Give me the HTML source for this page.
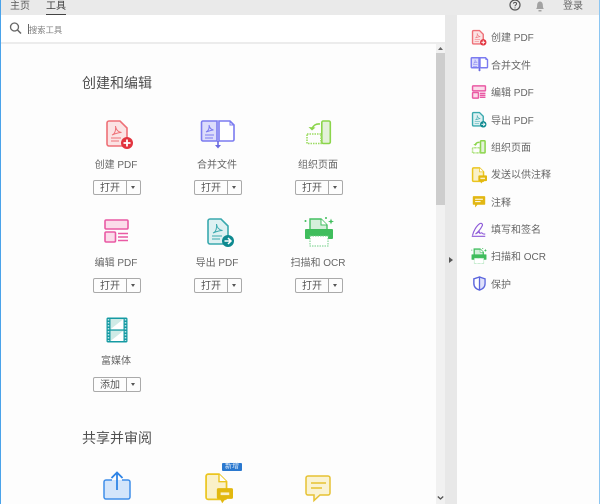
<!DOCTYPE html>
<html lang="zh"><head><meta charset="utf-8"><style>
*{box-sizing:border-box}
html,body{margin:0;padding:0}
body{width:600px;height:504px;overflow:hidden;position:relative;background:#fdfdfd;font-family:"Liberation Sans","Noto Sans CJK SC",sans-serif;color:#6e6e6e}
.a{position:absolute}
.t{position:absolute;white-space:nowrap;line-height:14px}
.lab{position:absolute;width:100px;text-align:center;font-size:10px;line-height:14px;color:#666;white-space:nowrap}
.h{position:absolute;left:82px;font-size:14px;line-height:20px;color:#505050;white-space:nowrap}
.btn{position:absolute;width:48px;height:15px;border:1px solid #aaa;border-radius:2px;background:#fdfdfd;font-size:10px;line-height:15px;color:#555}
.btn span{position:absolute;left:0;top:0;width:32px;height:13px;text-align:center}
.btn i{position:absolute;left:32px;top:0;width:1px;height:13px;background:#aaa}
.btn b{position:absolute;left:37px;top:5px;width:0;height:0;border:2.500px solid transparent;border-top:3px solid #555;border-bottom:0}
.s{position:absolute;left:491px;font-size:10px;line-height:14px;color:#666;white-space:nowrap}
svg{position:absolute;overflow:visible}
symbol{overflow:visible}
</style></head><body>

<div class="a" style="left:0;top:0;width:600px;height:15px;background:#eaeaea"></div>
<div class="t" style="left:10px;top:0;font-size:10px;color:#5a5a5a">主页</div>
<div class="t" style="left:46px;top:0;font-size:10px;color:#3f3f3f">工具</div>
<div class="a" style="left:46px;top:14px;width:20px;height:1px;background:#444"></div>
<div class="t" style="left:563px;top:0;font-size:10px;color:#666">登录</div>
<svg style="left:0;top:0" width="600" height="30">
<circle cx="515" cy="5" r="5" fill="none" stroke="#555" stroke-width="1.200"/>
<path d="M513.400 3.600c.3-1.600 3.200-1.600 3.200.2 0 1.200-1.600 1.100-1.600 2.400M515 7.400v1" fill="none" stroke="#555"/>
<path d="M536 9c1.200-1 1-2.500 1.200-4.500.3-2 1.500-3 2.800-3s2.500 1 2.800 3c.2 2 0 3.500 1.200 4.500z" fill="#a2a2a2"/>
<path d="M538.500 10h3v1.500h-3z" fill="#a2a2a2"/>
</svg>

<div class="a" style="left:0;top:15px;width:600px;height:27px;background:#fff"></div>
<svg style="left:0;top:15px" width="40" height="27">
<circle cx="14.500" cy="12" r="4" fill="none" stroke="#666" stroke-width="1.300"/>
<path d="M17.500 15l3.500 3.500" stroke="#666" stroke-width="1.500" fill="none"/>
</svg>
<div class="a" style="left:28px;top:24px;width:1px;height:10px;background:#666"></div>
<div class="t" style="left:29px;top:23px;font-size:8.300px;color:#808080">搜索工具</div>
<div class="a" style="left:0;top:42px;width:445px;height:2px;background:#ececec"></div>

<div class="a" style="left:436px;top:44px;width:9px;height:460px;background:#f1f1f1"></div>
<div class="a" style="left:436px;top:53px;width:9px;height:152px;background:#cdcdcd"></div>
<svg style="left:436px;top:44px" width="9" height="460">
<path d="M2 6l2.500-3 2.500 3z" fill="#666"/>
<path d="M1.800 452.500l2.700 2.500 2.700-2.500" fill="none" stroke="#555" stroke-width="1.300"/>
</svg>
<div class="a" style="left:445px;top:15px;width:12px;height:489px;background:#e8e8e8"></div>
<svg style="left:445px;top:250px" width="12" height="20"><path d="M4 7l4 3-4 3z" fill="#555"/></svg>
<div class="a" style="left:457px;top:15px;width:142px;height:489px;background:#fdfdfd"></div>
<div class="a" style="left:0;top:0;width:1px;height:504px;background:#4aa3ea"></div>
<div class="a" style="left:599px;top:0;width:1px;height:504px;background:#8cc6f2"></div>

<div class="h" style="top:73px">创建和编辑</div>

<svg width="0" height="0" style="left:0;top:0"><defs>
<symbol id="i1" viewBox="0 0 28 28"><path d="M1 3a2 2 0 0 1 2-2h11l7 7v16a2 2 0 0 1-2 2H3a2 2 0 0 1-2-2z" fill="#fbe3e4" stroke="#ee7077"/><path d="M5 18h10M5 21h8" stroke="#ee7077" stroke-width="1" fill="none"/><path d="M6 15c3-1 4-5 3.500-9 .5 4 3 6 6 6.500-3 0-6 1-9.500 2.500z" fill="none" stroke="#ee7077" stroke-width="1"/><circle cx="21" cy="23" r="6" fill="#e2343f"/><path d="M17.500 23h7M21 19.500v7" stroke="#fff" stroke-width="1.800"/></symbol>
<symbol id="i2" viewBox="0 0 34 29"><path d="M2 1h14v20H2a1.500 1.500 0 0 1-1.500-1.500v-17A1.500 1.500 0 0 1 2 1z" fill="#dcdcfb" stroke="#7b7bf0"/><path d="M18 1h11l4 4v14.500a1.500 1.500 0 0 1-1.500 1.500H18z" fill="#fff" stroke="#7b7bf0"/><path d="M29 1v4h4" fill="none" stroke="#7b7bf0" stroke-width="1"/><path d="M4 15h9M4 18h8" stroke="#7b7bf0" stroke-width="1"/><path d="M5 12c2.500-1 3.500-4 3-7 .5 3 2 4.500 4.500 5-2 0-4.500 1-7.500 2z" fill="none" stroke="#7b7bf0" stroke-width="1"/><path d="M17 21v6" stroke="#6a6ae0"/><path d="M14 25h6l-3 3.500z" fill="#6a6ae0"/></symbol>
<symbol id="i3" viewBox="0 0 26 25"><rect x="15.800" y="1" width="8.500" height="22.500" rx="1.500" fill="#e4f1da" stroke="#8bd54b"/><rect x="1" y="14" width="14" height="9.500" fill="none" stroke="#9bdc61" stroke-dasharray="1.500 1"/><path d="M14 4c-4-.5-7 1.500-8 5" fill="none" stroke="#8bd54b"/><path d="M2.500 7l3.500 3.500L9.500 7.500z" fill="#8bd54b"/></symbol>
<symbol id="i4" viewBox="0 0 25 24"><rect x="1" y="1" width="23" height="9" rx="1.200" fill="#fbdcea" stroke="#e95aa4"/><rect x="1" y="13" width="10.500" height="10" rx="1.200" fill="#fbdcea" stroke="#e95aa4"/><path d="M14 14.500h10M14 18h10M14 21.500h10" stroke="#e95aa4"/></symbol>
<symbol id="i5" viewBox="0 0 28 28"><path d="M1 3a2 2 0 0 1 2-2h11l7 7v16a2 2 0 0 1-2 2H3a2 2 0 0 1-2-2z" fill="#def1f2" stroke="#3aa9ae"/><path d="M5 18h10M5 21h8" stroke="#3aa9ae" stroke-width="1"/><path d="M6 15c3-1 4-5 3.500-9 .5 4 3 6 6 6.500-3 0-6 1-9.500 2.500z" fill="none" stroke="#3aa9ae" stroke-width="1"/><circle cx="21" cy="23" r="6" fill="#0e8a90"/><path d="M17.500 23h6M21 20l3 3-3 3" stroke="#fff" stroke-width="1.500" fill="none"/></symbol>
<symbol id="i6" viewBox="0 0 30 30"><path d="M6 13V2h11l6 6v5" fill="#d4efdb" stroke="#45c062"/><path d="M17 2v6h6" fill="#fff" stroke="#45c062" stroke-width="1"/><rect x="1" y="12" width="28" height="10" rx="1" fill="#3fbd5c"/><rect x="6" y="19" width="18" height="10" fill="#fff" stroke="#6fcf86" stroke-width="1" stroke-dasharray="1.500 1"/><path d="M27 1.500l.8 2.200 2.200.8-2.200.8-.8 2.200-.8-2.200-2.200-.8 2.200-.8z" fill="#3fbd5c"/><circle cx="1.500" cy="4" r="1" fill="#3fbd5c"/><circle cx="22" cy="1" r="1" fill="#3fbd5c"/></symbol>
<symbol id="i7" viewBox="0 0 22 26"><rect x=".5" y=".5" width="21" height="25" rx="1.500" fill="#159aa3"/><rect x="4.500" y="2" width="13" height="10.300" fill="#cfeae6"/><rect x="4.500" y="13.700" width="13" height="10.300" fill="#cfeae6"/><path d="M4.500 12.300L17.500 2v10.300zM4.500 24L17.500 13.700V24z" fill="#fff"/><path d="M2.500 2v22M19.500 2v22" stroke="#bfe6e8" stroke-width="1.500" stroke-dasharray="1.500 1.500"/></symbol>
<symbol id="i8" viewBox="0 0 26 25"><path d="M1 3a2 2 0 0 1 2-2h10l7 7v15a1.500 1.500 0 0 1-1.500 1.500H3a2 2 0 0 1-2-2z" fill="#faf1c8" stroke="#ebc51f"/><path d="M13 1v7h7" fill="#fff" stroke="#ebc51f" stroke-width="1.300"/><rect x="11" y="14" width="15" height="10" rx="1.500" fill="#e2b80f"/><path d="M14 24h5l-3 4z" fill="#e2b80f"/><path d="M14.500 18h8v2.500h-8z" fill="#faf1c8"/></symbol>
<symbol id="i9" viewBox="0 0 18 17"><path d="M2 1h14a1 1 0 0 1 1 1v9a1 1 0 0 1-1 1H7l-3 3.500V12H2a1 1 0 0 1-1-1V2a1 1 0 0 1 1-1z" fill="#e2b713"/><path d="M4 5h10M4 8h7" stroke="#fff" stroke-width="1.300"/></symbol>
<symbol id="i10" viewBox="0 0 20 20"><path d="M2 18C3 13 7 5 12 2c2-1 4 1 3 3-2 4-5 8-9 11 2-1 4-3 5-3 1 .5-.5 2 1 2s2-1.500 3 0 2 1 4 1M1 19h18" fill="none" stroke="#8d59d8" stroke-width="1.500"/></symbol>
<symbol id="i11" viewBox="0 0 14 16"><path d="M7 1l6 2v5c0 3.500-2.500 6-6 7-3.500-1-6-3.500-6-7V3z" fill="#dfe1fb" stroke="#5c66dd" stroke-width="1.400"/><path d="M7 1v14c-3.500-1-6-3.500-6-7V3z" fill="#fff" stroke="#5c66dd" stroke-width="1.400"/></symbol>
</defs></svg>

<svg style="left:106px;top:120px" width="28" height="28"><use href="#i1" width="28" height="28" stroke-width="1.600"/></svg>
<svg style="left:201px;top:120px" width="34" height="29"><use href="#i2" width="34" height="29" stroke-width="1.600"/></svg>
<svg style="left:306px;top:120px" width="26" height="25"><use href="#i3" width="26" height="25" stroke-width="1.600"/></svg>
<svg style="left:104px;top:219px" width="25" height="24"><use href="#i4" width="25" height="24" stroke-width="1.600"/></svg>
<svg style="left:207px;top:218px" width="28" height="28"><use href="#i5" width="28" height="28" stroke-width="1.600"/></svg>
<svg style="left:304px;top:217px" width="30" height="30"><use href="#i6" width="30" height="30" stroke-width="1.400"/></svg>
<svg style="left:106px;top:317px" width="22" height="26"><use href="#i7" width="22" height="26"/></svg>

<div class="lab" style="left:66px;top:159px">创建 PDF</div>
<div class="lab" style="left:167px;top:159px">合并文件</div>
<div class="lab" style="left:268px;top:159px">组织页面</div>
<div class="lab" style="left:66px;top:257px">编辑 PDF</div>
<div class="lab" style="left:167px;top:257px">导出 PDF</div>
<div class="lab" style="left:268px;top:257px">扫描和 OCR</div>
<div class="lab" style="left:66px;top:355px">富媒体</div>

<div class="btn" style="left:93px;top:180px"><span>打开</span><i></i><b></b></div>
<div class="btn" style="left:194px;top:180px"><span>打开</span><i></i><b></b></div>
<div class="btn" style="left:295px;top:180px"><span>打开</span><i></i><b></b></div>
<div class="btn" style="left:93px;top:278px"><span>打开</span><i></i><b></b></div>
<div class="btn" style="left:194px;top:278px"><span>打开</span><i></i><b></b></div>
<div class="btn" style="left:295px;top:278px"><span>打开</span><i></i><b></b></div>
<div class="btn" style="left:93px;top:377px"><span>添加</span><i></i><b></b></div>

<div class="h" style="top:428px">共享并审阅</div>

<svg style="left:103px;top:471px" width="28" height="29">
<path d="M9 9H3a2 2 0 0 0-2 2v15a2 2 0 0 0 2 2h22a2 2 0 0 0 2-2V11a2 2 0 0 0-2-2h-6" fill="#d3e5fb" stroke="#3f8ee9" stroke-width="1.500"/>
<path d="M9 9h4v9h2V9h4" fill="#d3e5fb"/>
<path d="M14 19V2M8.500 7L14 1.500 19.500 7" fill="none" stroke="#2f84e6" stroke-width="1.800"/>
</svg>
<svg style="left:205px;top:473px" width="28" height="30"><use href="#i8" width="28" height="27" stroke-width="1.600"/></svg>
<div class="a" style="left:222px;top:463px;width:20px;height:8px;background:#2a78cf;color:#dbe9f8;font-size:7px;line-height:8px;text-align:center;border-radius:1px">新增</div>
<svg style="left:305px;top:475px" width="28" height="28">
<path d="M3 1h20a2 2 0 0 1 2 2v15a2 2 0 0 1-2 2H15l-6 5.500V20H3a2 2 0 0 1-2-2V3a2 2 0 0 1 2-2z" fill="#faf3d3" stroke="#e6c233" stroke-width="1.500"/>
<path d="M6 8h15M6 13h11" stroke="#e6c233" stroke-width="1.500"/>
</svg>

<svg style="left:472px;top:30px" width="15" height="15"><use href="#i1" width="15" height="15" stroke-width="2.600"/></svg>
<svg style="left:471px;top:57px" width="17" height="15"><use href="#i2" width="17" height="15" stroke-width="2.800"/></svg>
<svg style="left:472px;top:85px" width="14" height="14"><use href="#i4" width="14" height="14" stroke-width="2.600"/></svg>
<svg style="left:472px;top:112px" width="15" height="15"><use href="#i5" width="15" height="15" stroke-width="2.600"/></svg>
<svg style="left:472px;top:140px" width="14" height="14"><use href="#i3" width="14" height="14" stroke-width="2.800"/></svg>
<svg style="left:472px;top:167px" width="15" height="15"><use href="#i8" width="15" height="15" stroke-width="2.600"/></svg>
<svg style="left:472px;top:195px" width="14" height="14"><use href="#i9" width="14" height="14"/></svg>
<svg style="left:471px;top:222px" width="15" height="15"><use href="#i10" width="15" height="15"/></svg>
<svg style="left:471px;top:248px" width="16" height="16"><use href="#i6" width="16" height="16" stroke-width="2.500"/></svg>
<svg style="left:473px;top:276px" width="13" height="15"><use href="#i11" width="13" height="15"/></svg>

<div class="s" style="top:32px">创建 PDF</div>
<div class="s" style="top:60px">合并文件</div>
<div class="s" style="top:87px">编辑 PDF</div>
<div class="s" style="top:115px">导出 PDF</div>
<div class="s" style="top:142px">组织页面</div>
<div class="s" style="top:169px">发送以供注释</div>
<div class="s" style="top:197px">注释</div>
<div class="s" style="top:224px">填写和签名</div>
<div class="s" style="top:251px">扫描和 OCR</div>
<div class="s" style="top:279px">保护</div>
</body></html>
